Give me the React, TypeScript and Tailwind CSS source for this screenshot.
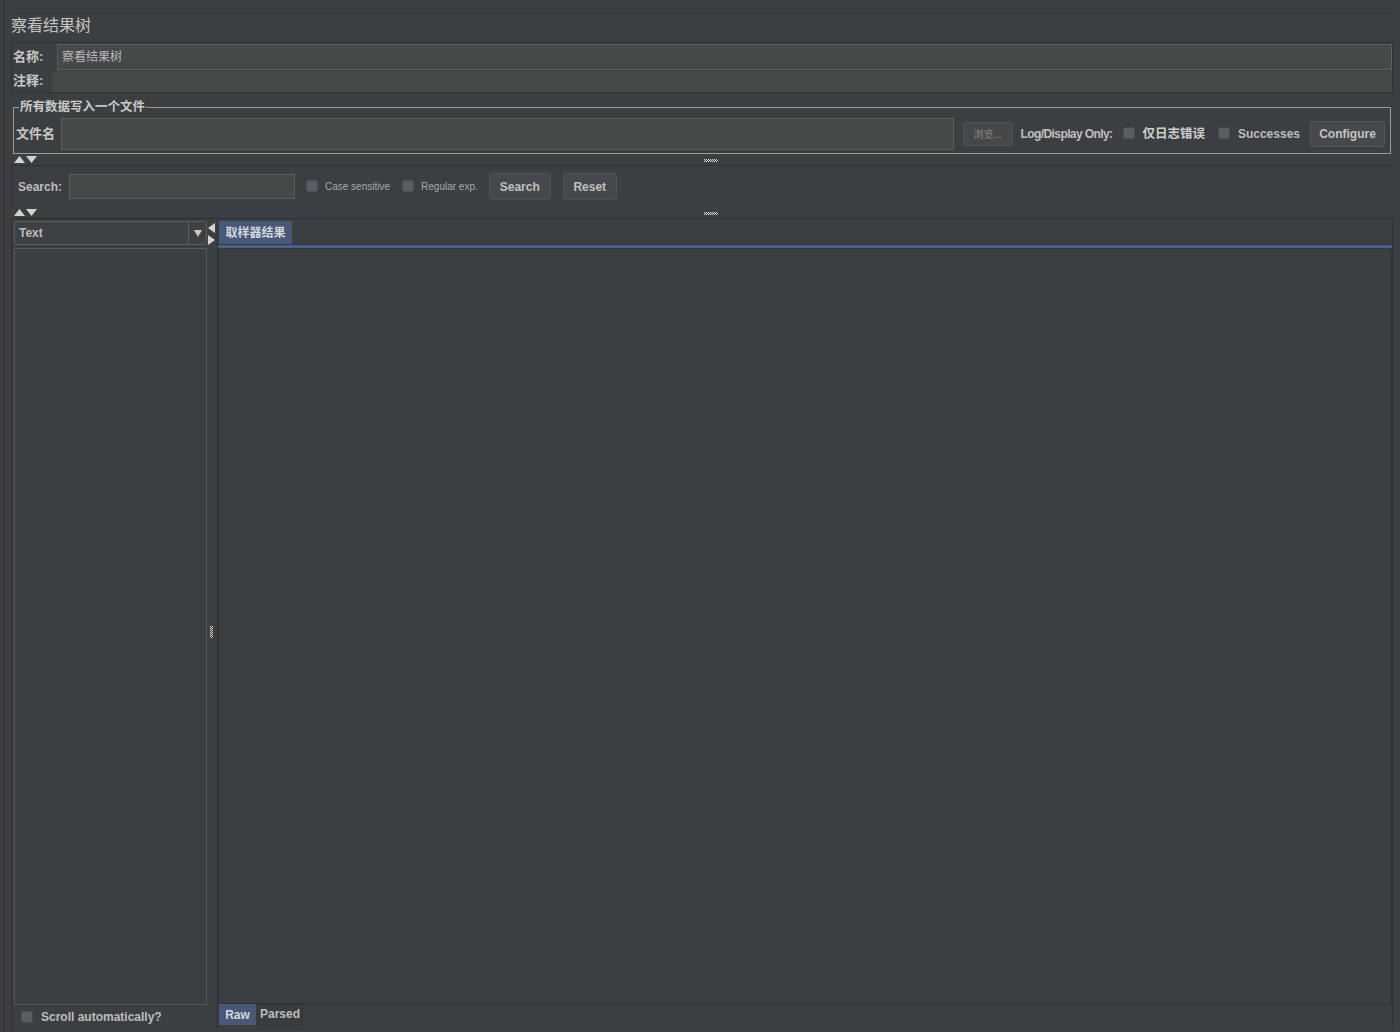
import React from "react";

const font = "font-['Liberation_Sans','Noto_Sans_CJK_SC',sans-serif]";

function Check() {
  return <span className="inline-block w-[12px] h-[12px] rounded-[2px] bg-[#5b5e60] border border-[#4a4d4f] shrink-0" />;
}

function UpDown() {
  return (
    <svg width="24" height="7" viewBox="0 0 24 7" className="block">
      <polygon points="0,7 5.5,0 11,7" fill="#d4d4d4" />
      <polygon points="12,0 23,0 17.5,7" fill="#d4d4d4" />
    </svg>
  );
}

function Grip({ vertical = false }: { vertical?: boolean }) {
  const cells: React.ReactNode[] = [];
  const cols = vertical ? 3 : 14;
  const rows = vertical ? 12 : 3;
  for (let r = 0; r < rows; r++)
    for (let c = 0; c < cols; c++)
      if ((r + c) % 2 === 0) cells.push(<rect key={`${r}-${c}`} x={c} y={r} width="1" height="1" fill="#d8d8d8" />);
  return (
    <svg width={cols} height={rows} className="block">
      {cells}
    </svg>
  );
}

export default function App() {
  return (
    <div className={`w-[1400px] h-[1032px] bg-[#3c3f41] text-[#bbbbbb] flex overflow-hidden ${font}`}>
      {/* left gutter */}
      <div className="w-[11px] h-full pl-[3px]">
        <div className="w-[2px] h-full bg-[#333537]" />
      </div>

      <div className="w-[1382px] flex flex-col">
        <div className="h-[14px] border-b border-[#303234]" />

        {/* title */}
        <div className="h-[28px] flex items-center pb-[4px] text-[16px] text-[#c4c4c4] leading-none">察看结果树</div>

        {/* name + comment */}
        <div className="border border-[#2e3032]">
          <div className="h-[27px] flex items-center">
            <div className="w-[45px] pl-[1px] text-[13px] font-bold text-[#c8c8c8]">名称:</div>
            <div className="flex-1 h-[26px] bg-[#45494a] border border-[#5a5e5f] flex items-center px-[4px] text-[12px] text-[#b8b8b8]">察看结果树</div>
          </div>
          <div className="h-[22px] flex items-center">
            <div className="w-[40px] pl-[1px] text-[13px] font-bold text-[#c8c8c8]">注释:</div>
            <div className="flex-1 h-[21px] bg-[#45494a]" />
          </div>
        </div>

        {/* fieldset */}
        <fieldset className="mt-[8px] mx-[2px] border border-[#9b9b9b] px-[2px] pb-[1px]">
          <legend className="ml-[3px] px-[1px] text-[12.5px] leading-[13px] font-bold text-[#c8c8c8]">所有数据写入一个文件</legend>
          <div className="h-[38px] flex items-center pt-[2px] whitespace-nowrap">
            <div className="w-[45px] shrink-0 text-[13px] font-bold text-[#c8c8c8]">文件名</div>
            <div className="flex-1 h-[32px] bg-[#45494a] border border-[#5a5e5f]" />
            <div className="ml-[9px] shrink-0 w-[50px] h-[24px] rounded-[3px] bg-[#45484a] border border-[#505355] flex items-center justify-center text-[10px] text-[#8a8a8a]">浏览...</div>
            <div className="ml-[8px] shrink-0 text-[12px] font-bold text-[#c0c0c0] tracking-[-0.6px]">Log/Display Only:</div>
            <div className="ml-[11px] shrink-0"><Check /></div>
            <div className="ml-[7px] shrink-0 text-[12.5px] font-bold text-[#cfcfcf]">仅日志错误</div>
            <div className="ml-[13px] shrink-0"><Check /></div>
            <div className="ml-[8px] shrink-0 text-[12px] font-bold text-[#bdbdbd]">Successes</div>
            <div className="ml-[10px] shrink-0 w-[75px] h-[26px] rounded-[3px] bg-[#46494b] border border-[#55585a] flex items-center justify-center text-[12px] font-bold text-[#c4c4c4]">Configure</div>
            <div className="w-[3px] shrink-0" />
          </div>
        </fieldset>

        {/* splitter 1 */}
        <div className="h-[12px] relative flex items-start pt-[2px] border-b border-[#2e3032]">
          <div className="ml-[3px]"><UpDown /></div>
          <div className="absolute left-[693px] top-[5px]"><Grip /></div>
        </div>

        {/* search row */}
        <div className="h-[41px] flex items-center border-l border-[#2e3032] whitespace-nowrap">
          <div className="ml-[6px] w-[51px] text-[12px] font-bold text-[#bdbdbd]">Search:</div>
          <div className="w-[226px] h-[25px] bg-[#45494a] border border-[#5a5e5f]" />
          <div className="ml-[11px]"><Check /></div>
          <div className="ml-[7px] text-[10px] text-[#a8a8a8]">Case sensitive</div>
          <div className="ml-[12px]"><Check /></div>
          <div className="ml-[7px] text-[10px] text-[#a8a8a8]">Regular exp.</div>
          <div className="ml-[11px] w-[62px] h-[27px] rounded-[3px] bg-[#46494b] border border-[#505355] flex items-center justify-center text-[12px] font-bold text-[#c0c0c0]">Search</div>
          <div className="ml-[12px] w-[54px] h-[27px] rounded-[3px] bg-[#46494b] border border-[#505355] flex items-center justify-center text-[12px] font-bold text-[#c0c0c0]">Reset</div>
        </div>

        {/* splitter 2 */}
        <div className="h-[12px] relative flex items-start pt-[2px] border-b border-[#2e3032]">
          <div className="ml-[3px]"><UpDown /></div>
          <div className="absolute left-[693px] top-[5px]"><Grip /></div>
        </div>

        {/* bottom split */}
        <div className="flex-1 flex border-l border-[#2e3032] pb-[4px]">
          {/* left tree */}
          <div className="w-[195px] flex flex-col pl-[2px] pt-[2px]">
            <div className="h-[24px] flex border border-[#5a5e5f] rounded-[2px] bg-[#3e4143]">
              <div className="flex-1 flex items-center pl-[4px] text-[12px] font-bold text-[#bcbcbc]">Text</div>
              <div className="w-[18px] border-l border-[#5a5e5f] flex items-center justify-center">
                <svg width="8" height="7" viewBox="0 0 8 7"><polygon points="0,0 8,0 4,7" fill="#c8c8c8" /></svg>
              </div>
            </div>
            <div className="mt-[3px] h-[757px] border border-[#55585a] bg-[#3c3f41]" />
            <div className="flex-1 flex items-center pl-[7px] gap-[8px] whitespace-nowrap">
              <Check />
              <span className="text-[12px] font-bold text-[#bdbdbd]">Scroll automatically?</span>
            </div>
          </div>

          {/* divider */}
          <div className="w-[11px] relative border-r border-[#2e3032]">
            <div className="absolute left-[1px] top-[4px] flex flex-col gap-[2px]">
              <svg width="7" height="10" viewBox="0 0 7 10"><polygon points="7,0 7,10 0,5" fill="#d4d4d4" /></svg>
              <svg width="7" height="10" viewBox="0 0 7 10"><polygon points="0,0 0,10 7,5" fill="#d4d4d4" /></svg>
            </div>
            <div className="absolute left-[3px] top-[407px]"><Grip vertical /></div>
          </div>

          {/* right results */}
          <div className="flex-1 flex flex-col pt-[2px] border-r border-[#2e3032]">
            <div className="h-[23px] flex pl-[1px]">
              <div className="w-[73px] bg-[#4a5878] rounded-t-[2px] flex items-center justify-center text-[12px] font-bold text-[#d2d6de]">取样器结果</div>
            </div>
            <div className="h-[5px] bg-[#4c6186] border-y border-[#2e3442]" />
            <div className="h-[755px] bg-[#3c3f41] border-x border-b border-[#2f3133]" />
            <div className="h-[21px] flex pl-[1px]">
              <div className="w-[37px] bg-[#4a5878] flex items-center justify-center text-[12px] font-bold text-[#d2d6de]">Raw</div>
              <div className="ml-[1px] w-[46px] bg-[#393b3d] border border-[#333537] flex items-center justify-center text-[12px] font-bold text-[#bcbcbc] pb-[2px]">Parsed</div>
            </div>
          </div>
        </div>
      </div>
    </div>
  );
}
